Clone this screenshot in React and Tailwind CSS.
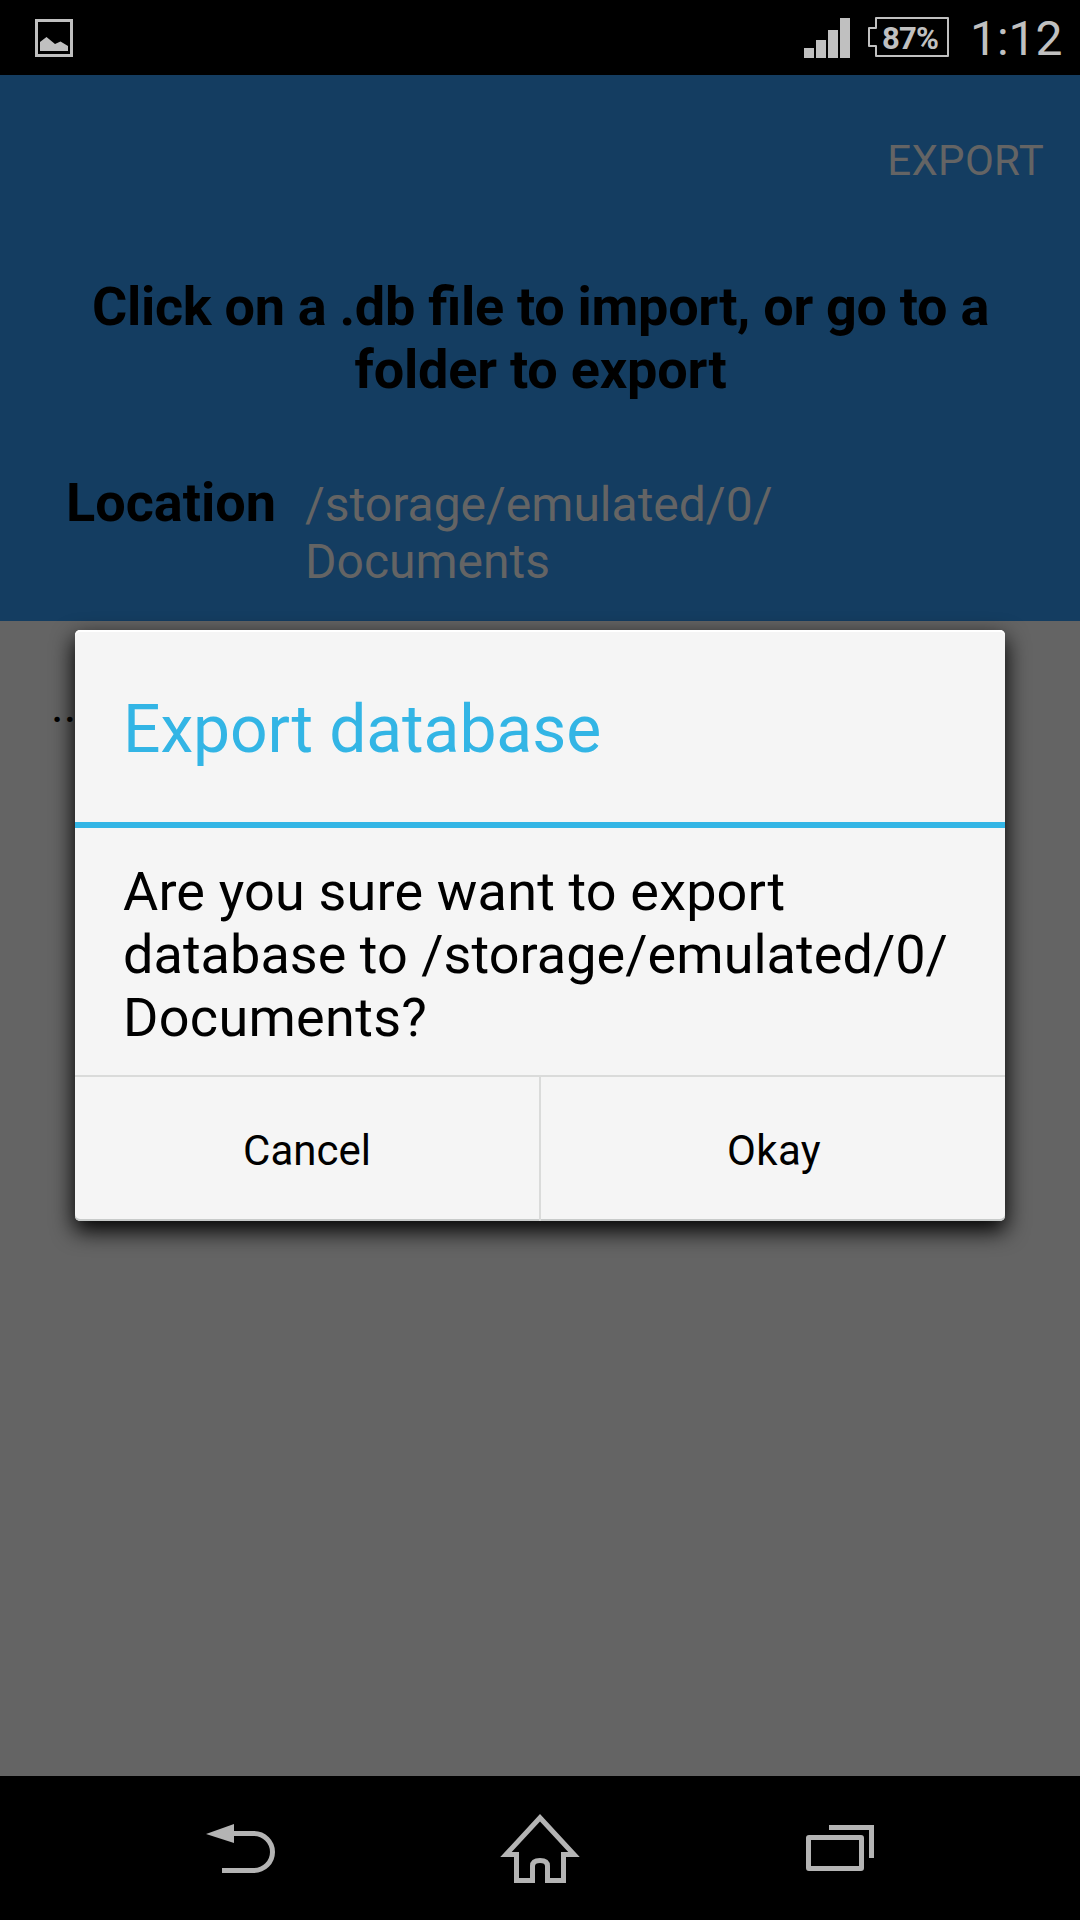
export default function App() {
  return (
    <div className="relative flex h-[1920px] w-[1080px] flex-col overflow-hidden bg-[#646464] font-[Roboto,sans-serif] text-black">
      <header className="flex h-[75px] shrink-0 items-start bg-black text-[#c0c0c0]">
        <svg className="mt-[19px] ml-[35px] h-[38px] w-[38px]" viewBox="0 0 38 38">
          <rect x="1.5" y="1.5" width="35" height="35" fill="none" stroke="#c0c0c0" strokeWidth="3" />
          <path d="M5 32V23L11.500 18L20 25L25.500 22.500L33 27V32Z" fill="#c0c0c0" />
        </svg>
        <svg className="mt-[18px] ml-auto h-[40px] w-[46px]" viewBox="0 0 46 40" fill="#c0c0c0">
          <path d="M0 30H10V40H0ZM12 22H22V40H12ZM24 12H34V40H24ZM36 0H46V40H36Z" />
        </svg>
        <div className="relative mt-[17px] ml-[18px] h-[40px] w-[81px]">
          <svg className="h-full w-full" viewBox="0 0 81 40" fill="none" stroke="#c0c0c0" strokeWidth="2">
            <path d="M8 1H80V39H8V29H1V11H8Z" strokeLinejoin="round" />
          </svg>
          <span className="absolute top-[4px] left-[14px] text-[31px] leading-[36px] font-bold tracking-[-0.8px]">87%</span>
        </div>
        <time className="mt-[11px] w-[131px] pl-[21px] text-[48px] leading-[56px] whitespace-nowrap">1:12</time>
      </header>

      <section className="h-[546px] shrink-0 bg-[#143d61]">
        <div className="flex justify-end pt-[61px] pr-[36px] text-[42px] leading-[49px] tracking-[0.3px] text-[#646464]">EXPORT</div>
        <h1 className="mt-[90px] pl-px text-center text-[54px] leading-[63px] font-bold">
          <span className="tracking-[-0.3px]">
            Click on a .db <span className="tracking-normal">fi</span>le to import, or go to a
          </span>
          <br />
          <span className="tracking-[-0.2px]">folder to export</span>
        </h1>
        <div className="mt-[70px] flex items-baseline pl-[66px]">
          <strong className="w-[239px] text-[54px] leading-[63px]">Location</strong>
          <p className="text-[48px] leading-[57px] text-[#646464]">/storage/emulated/0/<br />Documents</p>
        </div>
      </section>
      <main className="min-h-0 flex-1 pt-[61px] pl-[51px] text-[48px] leading-[48px]">..</main>

      <div className="absolute top-[630px] left-[75px] flex h-[591px] w-[930px] flex-col rounded-[5px] bg-[#f5f5f5] shadow-[inset_0_2px_0_#ffffff,inset_0_-2px_0_#c8cbca,0_9px_22px_1px_rgba(0,0,0,0.98)]" role="dialog">
        <h2 className="h-[192px] pt-[61px] pl-[48px] text-[66px] leading-[77px] tracking-[-0.1px] text-[#33b5e5]">Export database</h2>
        <div className="h-[6px] bg-[#33b5e5]" />
        <p className="h-[247px] pt-[32px] pl-[48px] text-[54px] leading-[63px]">
          <span className="tracking-[0.17px]">Are you sure want to export</span>
          <br />
          <span className="tracking-[0.04px]">database to /storage/emulated/0/</span>
          <br />
          <span className="tracking-[0.3px]">Documents?</span>
        </p>
        <div className="flex h-[146px] border-t-2 border-[#dadbda] text-[42px]">
          <button className="w-[466px] border-r-2 border-[#dadbda] pt-[2px]">Cancel</button>
          <button className="w-[464px] pt-[2px] pl-[2px] tracking-[0.3px]">Okay</button>
        </div>
      </div>

      <nav className="flex h-[144px] shrink-0 bg-black pt-[24px]">
        <svg className="ml-[180px] h-[90px] w-[130px]" viewBox="0 0 130 90">
          <path d="M26 34L54 24V43Z" fill="#b4b4b4" />
          <path d="M53 33.500H74A18.500 18.500 0 0 1 74 70.500H42" fill="none" stroke="#b4b4b4" strokeWidth="5" />
        </svg>
        <svg className="ml-[170px] h-[90px] w-[120px]" viewBox="0 0 120 90">
          <path d="M60 17.800L26 54.500H36.500V80.500H52.500V66Q52.500 60.500 60 60.500T67.500 66V80.500H83.500V54.500H94Z" fill="none" stroke="#b4b4b4" strokeWidth="5" />
        </svg>
        <svg className="ml-[180px] h-[90px] w-[120px]" viewBox="0 0 120 90" fill="none" stroke="#b4b4b4" strokeWidth="5">
          <rect x="28.500" y="37.500" width="53" height="31" rx="0.500" />
          <path d="M49 27.500H91.500V58" />
        </svg>
      </nav>
    </div>
  );
}
